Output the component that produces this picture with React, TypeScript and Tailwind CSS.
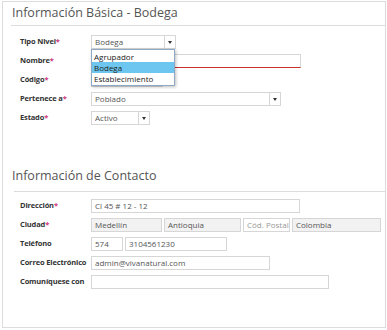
import React from "react";

const font = { fontFamily: "'Open Sans', 'Noto Sans', sans-serif" };

function Label({ text, req }: { text: string; req?: boolean }) {
  return (
    <span className="w-[88px] shrink-0 pl-[17px] text-[7.5px] font-bold tracking-[-0.15px] text-[#333] whitespace-nowrap">
      {text}
      {req && <span className="text-[#d0337a]">*</span>}
    </span>
  );
}

function Box({ w, value, grey, placeholder, className = "" }: { w: number; value?: string; grey?: boolean; placeholder?: string; className?: string }) {
  return (
    <div
      className={`h-[14px] shrink-0 border border-[#d6d6d6] px-[3px] flex items-center whitespace-nowrap overflow-hidden text-[8px] ${grey ? "bg-[#f2f2f2]" : "bg-white"} ${placeholder ? "text-[#999]" : "text-[#555]"} ${className}`}
      style={{ width: w }}
    >
      {value ?? placeholder}
    </div>
  );
}

function Select({ w, value }: { w: number; value: string }) {
  return (
    <div className="h-[14px] shrink-0 border border-[#d6d6d6] flex text-[8px] text-[#555] bg-white" style={{ width: w }}>
      <span className="flex-1 px-[3px] flex items-center">{value}</span>
      <span className="w-[11px] border-l border-[#d6d6d6] flex items-center justify-center">
        <svg width="4" height="3" viewBox="0 0 4 3"><path d="M0 0h4L2 3z" fill="#333" /></svg>
      </span>
    </div>
  );
}

export default function App() {
  return (
    <div className="w-[387px] h-[330px] bg-white" style={font}>
      <div className="ml-[2px] mt-[1px] w-[384px] h-[327px] border border-[#dcdcdc]">
        <div className="ml-[8px] h-[24px] border-b border-[#dcdcdc] flex items-center pl-[1px] text-[12.5px] text-[#555]">
          Información Básica - Bodega
        </div>

        <div className="relative mt-[9px] flex flex-col gap-[5px]">
          <div className="flex items-center">
            <Label text="Tipo Nivel" req />
            <Select w={85} value="Bodega" />
          </div>
          <div className="flex items-center">
            <Label text="Nombre" req />
            <Box w={210} value="" className="border-b-[#c9302c]" />
          </div>
          <div className="flex items-center">
            <Label text="Código" req />
            <Box w={72} value="" />
          </div>
          <div className="flex items-center">
            <Label text="Pertenece a" req />
            <Select w={190} value="Poblado" />
          </div>
          <div className="flex items-center">
            <Label text="Estado" req />
            <Select w={59} value="Activo" />
          </div>

          <div className="absolute left-[88px] top-[14px] w-[84px] border border-[#8fa9c4] bg-white shadow-[1px_1px_3px_rgba(0,0,0,0.25)] text-[8px] text-[#222] py-[1px]">
            <div className="h-[11px] px-[2px] flex items-center">Agrupador</div>
            <div className="h-[11px] px-[2px] flex items-center bg-[#6cc6ef]">Bodega</div>
            <div className="h-[11px] px-[2px] flex items-center">Establecimiento</div>
          </div>
        </div>

        <div className="ml-[11px] mt-[43px] h-[24px] border-b border-[#dcdcdc] flex items-end pb-[5px] text-[12.5px] text-[#555]">
          <span className="-ml-[2px]">Información de Contacto</span>
        </div>

        <div className="mt-[7px] flex flex-col gap-[5px]">
          <div className="flex items-center">
            <Label text="Dirección" req />
            <Box w={209} value="Cl 45 # 12 - 12" />
          </div>
          <div className="flex items-center">
            <Label text="Ciudad" req />
            <div className="flex gap-[2px]">
              <Box w={71} value="Medellín" grey />
              <Box w={77} value="Antioquia" grey />
              <Box w={47} placeholder="Cód. Postal" />
              <Box w={89} value="Colombia" grey />
            </div>
          </div>
          <div className="flex items-center">
            <Label text="Teléfono" />
            <div className="flex gap-[2px]">
              <Box w={32} value="574" />
              <Box w={102} value="3104561230" />
            </div>
          </div>
          <div className="flex items-center">
            <Label text="Correo Electrónico" />
            <Box w={179} value="admin@vivanatural.com" />
          </div>
          <div className="flex items-center">
            <Label text="Comuníquese con" />
            <Box w={238} value="" />
          </div>
        </div>
      </div>
    </div>
  );
}
